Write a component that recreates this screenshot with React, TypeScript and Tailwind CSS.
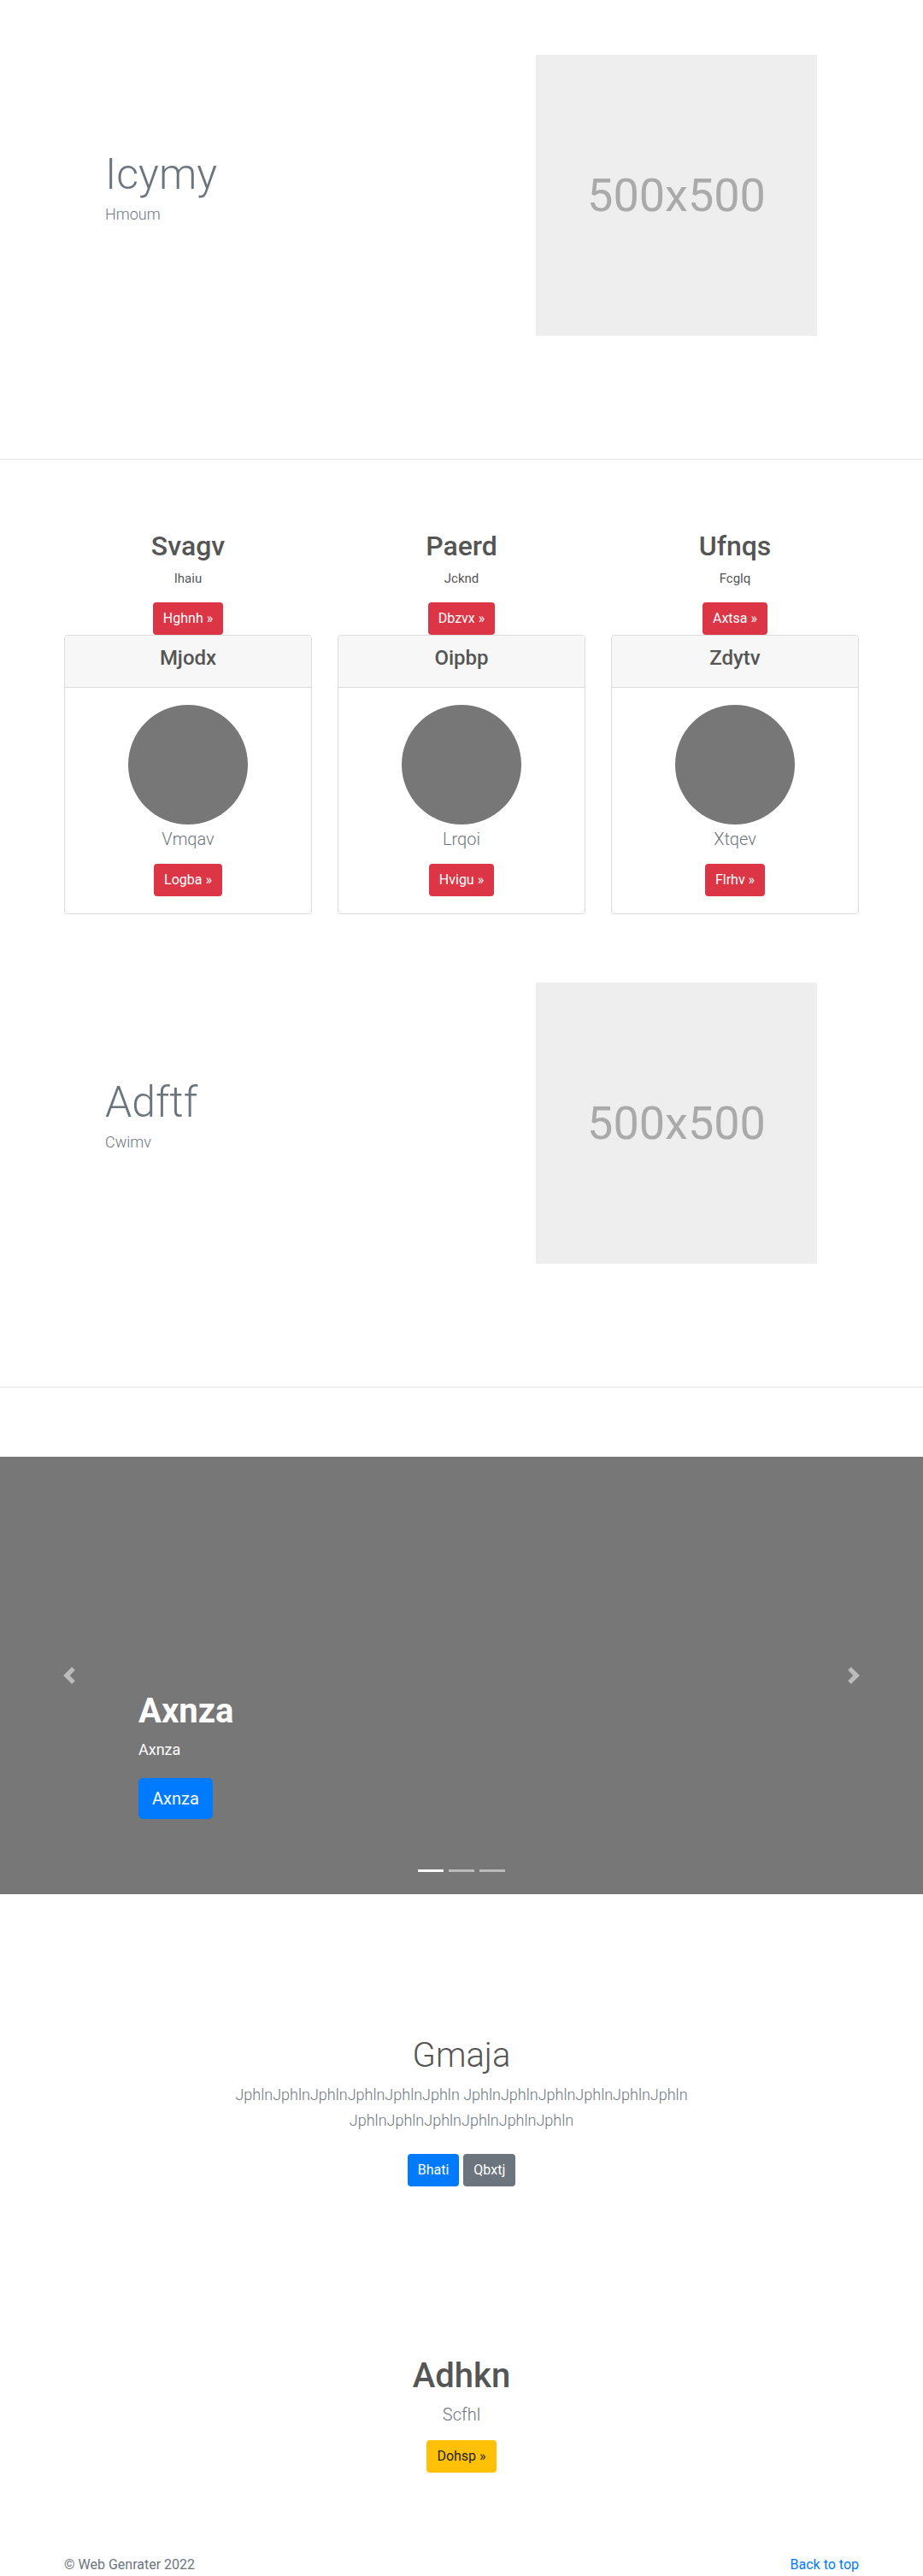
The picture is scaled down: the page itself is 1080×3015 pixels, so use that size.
const features = [
  { title: "Svagv", sub: "Ihaiu", cta: "Hghnh", card: "Mjodx", caption: "Vmqav", btn: "Logba" },
  { title: "Paerd", sub: "Jcknd", cta: "Dbzvx", card: "Oipbp", caption: "Lrqoi", btn: "Hvigu" },
  { title: "Ufnqs", sub: "Fcglq", cta: "Axtsa", card: "Zdytv", caption: "Xtqev", btn: "Flrhv" },
];

const RedButton = ({ label }: { label: string }) => (
  <button className="rounded bg-[#dc3545] px-3 py-[7px] text-[16px] leading-[24px] text-white">
    {label} »
  </button>
);

// bloc titre + placeholder 500x500
const Hero = ({ title, sub }: { title: string; sub: string }) => (
  <section className="border-b border-[#e5e5e5]">
    <div className="flex pt-[64px] pb-[144px]">
      <div className="flex-1 pl-[123px] pt-[110px]">
        <h1 className="text-[50px] font-light leading-[60px] text-[#6c757d]">{title}</h1>
        <p className="mt-[3px] text-[18px] font-light leading-[27px] text-[#6c757d]">{sub}</p>
      </div>
      <div className="mr-[124px] flex h-[329px] w-[329px] items-center justify-center bg-[#eee]">
        <span className="text-[54px] text-[#aaa]">500x500</span>
      </div>
    </div>
  </section>
);

const Chevron = ({ dir }: { dir: "prev" | "next" }) => (
  <svg width="20" height="20" viewBox="0 0 8 8" fill="#fff" className="opacity-50">
    {dir === "prev" ? (
      <path d="M5.25 0l-4 4 4 4 1.5-1.5-2.5-2.5 2.5-2.5-1.5-1.5z" />
    ) : (
      <path d="M2.75 0l-1.5 1.5 2.5 2.5-2.5 2.5 1.5 1.5 4-4-4-4z" />
    )}
  </svg>
);

const Carousel = () => (
  <div className="relative mt-[81px] h-[512px] bg-[#777]">
    <div className="absolute inset-y-0 left-0 flex w-[15%] items-center justify-center">
      <Chevron dir="prev" />
    </div>
    <div className="absolute inset-y-0 right-0 flex w-[15%] items-center justify-center">
      <Chevron dir="next" />
    </div>
    <div className="absolute left-[15%] top-[274px] text-white">
      <h2 className="mb-[7px] text-[40px] font-bold leading-[48px]">Axnza</h2>
      <p className="text-[18px] leading-[27px]">Axnza</p>
      <button className="mt-[20px] flex h-[48px] items-center rounded-[5px] bg-[#007bff] px-4 text-[20px] text-white">
        Axnza
      </button>
    </div>
    <div className="absolute bottom-[26px] left-0 right-0 flex justify-center gap-[6px]">
      <span className="h-[3px] w-[30px] bg-white" />
      <span className="h-[3px] w-[30px] bg-white/50" />
      <span className="h-[3px] w-[30px] bg-white/50" />
    </div>
  </div>
);

export default function App() {
  return (
    <div className="w-[1080px] bg-white font-['Roboto','Liberation_Sans',sans-serif] text-[#555]">
      <Hero title="Icymy" sub="Hmoum" />

      <section className="pt-[82px] pb-[16px]">
        <div className="mx-auto grid w-[930px] grid-cols-3 gap-x-[30px]">
          {features.map((f) => (
            <div key={f.title} className="flex flex-col items-center">
              <h2 className="mb-2 text-[32px] font-medium leading-[38.4px] text-[#555]">{f.title}</h2>
              <p className="mb-4 text-[15px] leading-[22.5px] text-[#555]">{f.sub}</p>
              <RedButton label={f.cta} />
              <div className="w-full rounded border border-[#ddd]">
                <div className="h-[61px] rounded-t-[3px] border-b border-[#ddd] bg-[#f7f7f7] pt-[12px] text-center">
                  <h3 className="text-[24px] font-medium leading-[28.8px] text-[#555]">{f.card}</h3>
                </div>
                <div className="flex flex-col items-center px-5 pt-5 pb-5">
                  <div className="h-[140px] w-[140px] rounded-full bg-[#777]" />
                  <p className="mt-[2px] text-[20px] font-light leading-[30px] text-[#6c757d]">{f.caption}</p>
                  <div className="mt-[14px]">
                    <RedButton label={f.btn} />
                  </div>
                </div>
              </div>
            </div>
          ))}
        </div>
      </section>

      <Hero title="Adftf" sub="Cwimv" />

      <Carousel />

      <section className="pt-[165px] text-center">
        <h1 className="mb-[7px] text-[40px] font-light leading-[48px] text-[#555]">Gmaja</h1>
        <p className="mx-auto max-w-[640px] text-[18px] font-light leading-[30px] text-[#6c757d]">
          JphlnJphlnJphlnJphlnJphlnJphln JphlnJphlnJphlnJphlnJphlnJphln JphlnJphlnJphlnJphlnJphlnJphln
        </p>
        <div className="mt-[24px] flex justify-center gap-[5px]">
          <button className="rounded bg-[#007bff] px-3 py-[7px] text-[16px] leading-[24px] text-white">Bhati</button>
          <button className="rounded bg-[#6c757d] px-3 py-[7px] text-[16px] leading-[24px] text-white">Qbxtj</button>
        </div>
      </section>

      <section className="mt-[198px] flex flex-col items-center">
        <h2 className="mb-[6px] text-[40px] font-medium leading-[48px] text-[#555]">Adhkn</h2>
        <p className="text-[20px] font-light leading-[30px] text-[#6c757d]">Scfhl</p>
        <button className="mt-[15px] rounded bg-[#ffc107] px-3 py-[7px] text-[16px] leading-[24px] text-[#212529]">
          Dohsp »
        </button>
      </section>

      <footer className="mt-[96px] flex justify-between px-[75px] pb-[1px] text-[16px] leading-[24px]">
        <p className="text-[#6c757d]">© Web Genrater 2022</p>
        <a href="#" className="text-[#007bff]">Back to top</a>
      </footer>
    </div>
  );
}
